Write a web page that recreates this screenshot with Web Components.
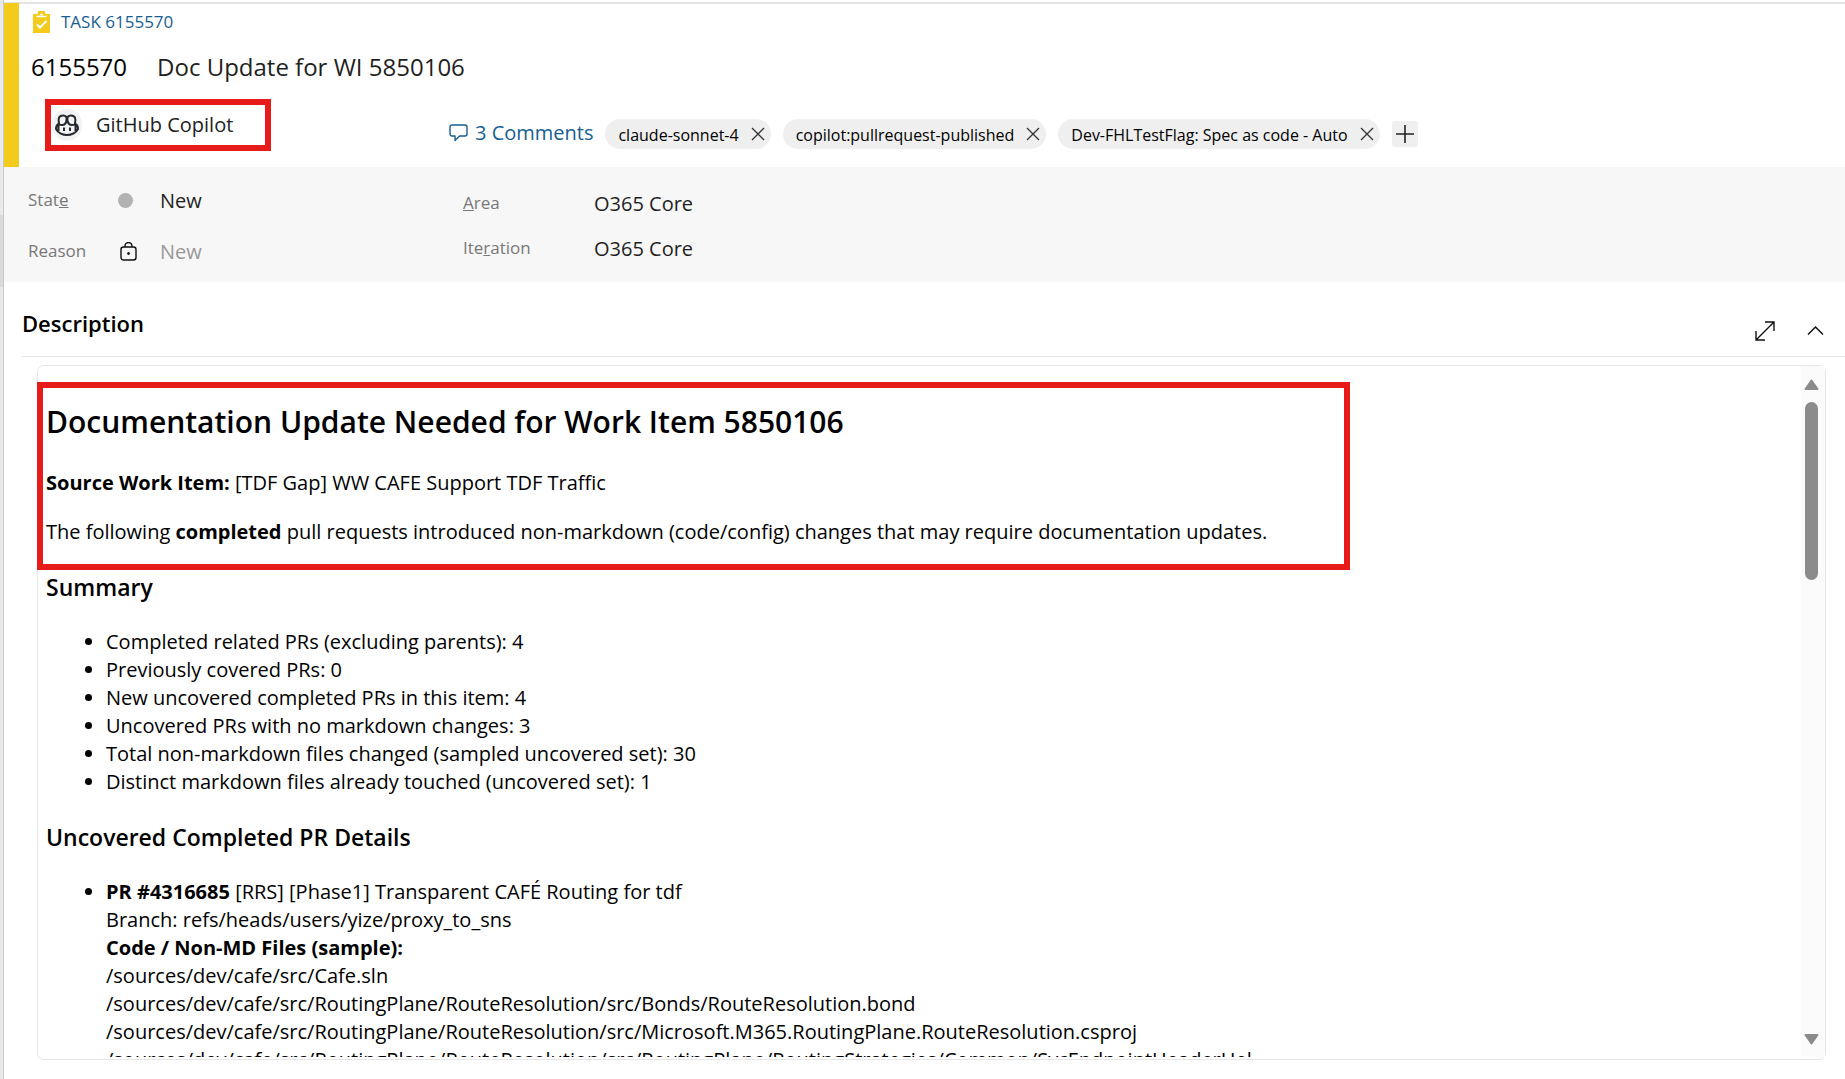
<!DOCTYPE html>
<html lang="en">
<head>
<meta charset="utf-8">
<title>Task 6155570</title>
<style>
html, body { height: 100%; margin: 0; }
body { font-family: "Open Sans", "Noto Sans", sans-serif; font-size: 20px; line-height: 28px; color: #000; background: #fff; overflow: hidden; }
</style>
</head>
<body>
<work-item-page></work-item-page>
<script>
function define(name, html) {
  const template = document.createElement('template');
  template.innerHTML = html;
  customElements.define(name, class extends HTMLElement {
    constructor() {
      super();
      this.attachShadow({ mode: 'open' }).append(template.content.cloneNode(true));
    }
  });
}

define('call-out', `
<style>
:host { display: block; box-sizing: border-box; border: 6px solid #e81b1b; }
</style>
<slot></slot>`);

define('tag-chip', `
<style>
:host { display: flex; align-items: center; gap: 9px; height: 30px; padding: 0 3px 0 13px; border-radius: 15px; background: #efefef; font-size: 16px; line-height: 30px; white-space: nowrap; }
span { padding-top: 2px; }
button { display: flex; align-items: center; justify-content: center; width: 20px; height: 20px; padding: 0; border: 0; background: none; }
</style>
<span><slot></slot></span>
<button aria-label="Remove tag"><svg width="14" height="14" viewBox="0 0 14 14" fill="none" stroke="#333" stroke-width="1.3"><path d="M1 1l12 12M13 1L1 13"/></svg></button>`);

define('field-row', `
<style>
:host { display: flex; align-items: center; height: 30px; }
.label { width: var(--label, 90px); font-size: 17px; line-height: 24px; color: #777; }
.icon { display: flex; align-items: center; width: var(--icon, 42px); flex: none; }
.value { padding-top: 1px; font-size: 20px; line-height: 28px; color: #1f1f1f; }
</style>
<div class="label"><slot name="label"></slot></div>
<div class="icon"><slot name="icon"></slot></div>
<div class="value"><slot></slot></div>`);

define('work-item-header', `
<style>
:host { display: block; box-sizing: border-box; height: 164px; border-left: 15px solid #f2cb1d; }
.task { display: flex; align-items: center; gap: 11px; padding: 7px 0 0 14px; height: 24px; }
a { color: #175e93; text-decoration: none; }
.task a { font-size: 17px; line-height: 24px; }
h1 { display: flex; gap: 30px; margin: 15px 0 0; padding-left: 12px; font-size: 24px; line-height: 36px; font-weight: 400; }
h1 span + span { color: #1f1f1f; }
.row { display: flex; padding: 14px 0 0 26px; }
call-out { display: flex; align-items: center; gap: 14px; width: 226px; height: 52px; padding-left: 1px; color: #222; font-size: 20px; }
.avatar { display: flex; align-items: center; justify-content: center; width: 30px; height: 32px; border-radius: 16px; background: #f2f2f2; }
.tags { display: flex; align-items: center; gap: 12px; margin: 17px 0 0 178px; height: 36px; }
.comments { display: flex; align-items: center; gap: 7px; padding-bottom: 2px; font-size: 20px; white-space: nowrap; }
.add { display: flex; align-items: center; justify-content: center; width: 26px; height: 26px; padding: 0; border: 0; border-radius: 3px; background: #efefef; }
</style>
<div class="task">
  <svg width="17" height="22" viewBox="0 0 17 22"><path fill="#f2cb1d" d="M0 3h4.500a4 4 0 0 1 8 0H17v19H0z"/><path fill="none" stroke="#fff" stroke-width="1.500" d="M3.500 5.500h10M7 3.500h3"/><path fill="none" stroke="#fff" stroke-width="2" d="M4 13.500l3 3 6.500-6.500"/></svg>
  <a href="#">TASK 6155570</a>
</div>
<h1><span>6155570</span><span>Doc Update for WI 5850106</span></h1>
<div class="row">
  <call-out>
    <span class="avatar"><svg width="24" height="22" viewBox="0 0 24 22" fill="none" stroke="#24292f" stroke-width="2"><path d="M3.500 10C1.500 11 1 12.500 1 15c2 4 7 6 11 6s9-2 11-6c0-2.500-.5-4-2.500-5M3.500 10v7M20.500 10v7"/><path d="M4 9.500C3 5 3.500 1.500 8 1.500c3 0 4 1.500 3.500 5S9 11 7 11s-3-.5-3-1.500zM20 9.500c1-4.500.5-8-4-8-3 0-4 1.500-3.500 5S15 11 17 11s3-.5 3-1.500z"/><path d="M9 13.500v3.500M15 13.500v3.500"/></svg></span>
    <span>GitHub Copilot</span>
  </call-out>
  <div class="tags">
    <a class="comments" href="#"><svg width="19" height="18" viewBox="0 0 19 18" fill="none" stroke="#175e93" stroke-width="1.400" stroke-linejoin="round"><path d="M3 1h13a2 2 0 0 1 2 2v7a2 2 0 0 1-2 2h-5.500L6 16.500V12H3a2 2 0 0 1-2-2V3a2 2 0 0 1 2-2z"/></svg><span>3 Comments</span></a>
    <tag-chip>claude-sonnet-4</tag-chip>
    <tag-chip>copilot:pullrequest-published</tag-chip>
    <tag-chip>Dev-FHLTestFlag: Spec as code - Auto</tag-chip>
    <button class="add" aria-label="Add tag"><svg width="18" height="18" viewBox="0 0 18 18" stroke="#222" stroke-width="1.600"><path d="M0 9h18M9 0v18"/></svg></button>
  </div>
</div>`);

define('work-item-fields', `
<style>
:host { display: flex; box-sizing: border-box; height: 115px; padding: 18px 0 0 24px; background: #f7f7f7; }
.status { width: 435px; display: flex; flex-direction: column; gap: 21px; }
.paths { display: flex; flex-direction: column; gap: 15px; padding-top: 3px; --label: 131px; --icon: 0px; }
.dot { width: 15px; height: 15px; border-radius: 50%; background: #b2b2b2; }
.lock { margin-left: 2px; }
.muted { color: #999; }
</style>
<div class="status">
  <field-row><span slot="label">Stat<u>e</u></span><i slot="icon" class="dot"></i>New</field-row>
  <field-row><span slot="label">Reason</span><svg slot="icon" class="lock" width="17" height="19" viewBox="0 0 17 19" fill="none" stroke="#111" stroke-width="1.400"><rect x="1" y="5" width="15" height="13" rx="2.500"/><path d="M5 5V4a3.500 3.500 0 0 1 7 0v1"/><circle cx="8.500" cy="11.500" r="1" fill="#111" stroke-width="1"/></svg><span class="muted">New</span></field-row>
</div>
<div class="paths">
  <field-row><span slot="label"><u>A</u>rea</span>O365 Core</field-row>
  <field-row><span slot="label">Ite<u>r</u>ation</span>O365 Core</field-row>
</div>`);

define('section-header', `
<style>
:host { display: flex; justify-content: space-between; box-sizing: border-box; height: 75px; margin-left: 18px; padding: 23px 21px 0 0; border-bottom: 1px solid #e6e6e6; }
h2 { margin: 0; font-size: 22px; line-height: 36px; font-weight: 600; }
.tools { display: flex; gap: 32px; height: 52px; align-items: center; }
button { display: flex; padding: 0; border: 0; background: none; }
</style>
<h2><slot></slot></h2>
<div class="tools">
  <button aria-label="Full screen"><svg width="20" height="20" viewBox="0 0 20 20" fill="none" stroke="#111" stroke-width="1.400"><path d="M1.500 18.500l17-17M10 1h9v9M1 10v9h9"/></svg></button>
  <button aria-label="Collapse"><svg width="17" height="20" viewBox="0 0 17 20" fill="none" stroke="#111" stroke-width="1.500"><path d="M1 13.500l7.500-7.500 7.500 7.500"/></svg></button>
</div>`);

define('scroll-bar', `
<style>
:host { display: flex; flex-direction: column; align-items: center; justify-content: space-between; box-sizing: border-box; width: 24px; margin-bottom: 2px; padding: 13px 3px 12px 0; background: #fbfbfb; }
button { display: flex; padding: 0; border: 0; background: none; }
.top { display: flex; flex-direction: column; align-items: center; gap: 12px; }
.thumb { width: 13px; height: 178px; border-radius: 7px; background: #8b8b8b; }
</style>
<div class="top">
  <button aria-label="Scroll up"><svg width="15" height="11" viewBox="0 0 15 11"><path fill="#8b8b8b" stroke="#8b8b8b" stroke-width="2" stroke-linejoin="round" d="M1.500 10L7.500 1.500 13.500 10z"/></svg></button>
  <div class="thumb"></div>
</div>
<button aria-label="Scroll down"><svg width="15" height="11" viewBox="0 0 15 11"><path fill="#8b8b8b" stroke="#8b8b8b" stroke-width="2" stroke-linejoin="round" d="M1.500 1L7.500 9.500 13.500 1z"/></svg></button>`);

define('rich-text', `
<style>
:host { display: flex; box-sizing: border-box; border: 1px solid #e6e6e6; border-radius: 7px; }
.scroll { flex: 1; min-width: 0; overflow: hidden; margin: 6px 0 2px -1px; }
.doc { padding: 10px 0 0; }
call-out { width: 1313px; max-width: 100%; height: 188px; padding: 14px 0 0 3px; }
.rest { padding-left: 9px; }
h2, h3, p, ul { margin: 0; }
h2 { font-size: 30px; line-height: 40px; font-weight: 600; }
h3 { font-size: 23px; line-height: 34px; font-weight: 600; }
p { margin-top: 21px; white-space: nowrap; }
h2 + p { margin-top: 27px; }
ul { margin: 24px 0; padding-left: 60px; white-space: nowrap; }
b { font-weight: 700; }
</style>
<div class="scroll"><div class="doc">
<call-out>
<h2>Documentation Update Needed for Work Item 5850106</h2>
<p><b>Source Work Item:</b> [TDF Gap] WW CAFE Support TDF Traffic</p>
<p>The following <b>completed</b> pull requests introduced non-markdown (code/config) changes that may require documentation updates.</p>
</call-out>
<div class="rest">
<h3>Summary</h3>
<ul>
<li>Completed related PRs (excluding parents): 4</li>
<li>Previously covered PRs: 0</li>
<li>New uncovered completed PRs in this item: 4</li>
<li>Uncovered PRs with no markdown changes: 3</li>
<li>Total non-markdown files changed (sampled uncovered set): 30</li>
<li>Distinct markdown files already touched (uncovered set): 1</li>
</ul>
<h3>Uncovered Completed PR Details</h3>
<ul>
<li><b>PR #4316685</b> [RRS] [Phase1] Transparent CAFÉ Routing for tdf<br>
Branch: refs/heads/users/yize/proxy_to_sns<br>
<b>Code / Non-MD Files (sample):</b><br>
/sources/dev/cafe/src/Cafe.sln<br>
/sources/dev/cafe/src/RoutingPlane/RouteResolution/src/Bonds/RouteResolution.bond<br>
/sources/dev/cafe/src/RoutingPlane/RouteResolution/src/Microsoft.M365.RoutingPlane.RouteResolution.csproj<br>
/sources/dev/cafe/src/RoutingPlane/RouteResolution/src/RoutingPlane/RoutingStrategies/Common/SvcEndpointHeaderHel</li>
</ul>
</div>
</div></div>
<scroll-bar></scroll-bar>`);

define('work-item-page', `
<style>
:host { display: flex; height: 100%; }
.rail { box-sizing: border-box; width: 4px; border-right: 1px solid #c9c9c9; background: #e9e9e9; padding-top: 215px; }
.rail div { height: 72px; background: #dadada; }
main { flex: 1; min-width: 0; display: flex; flex-direction: column; padding-top: 2px; }
.line { height: 2px; background: #e4e4e4; flex: none; }
work-item-header { margin-top: -1px; }
rich-text { flex: 1; min-height: 0; margin: 8px 19px 19px 33px; }
</style>
<div class="rail"><div></div></div>
<main>
  <div class="line"></div>
  <work-item-header></work-item-header>
  <work-item-fields></work-item-fields>
  <section-header>Description</section-header>
  <rich-text></rich-text>
</main>`);
</script>
</body>
</html>
